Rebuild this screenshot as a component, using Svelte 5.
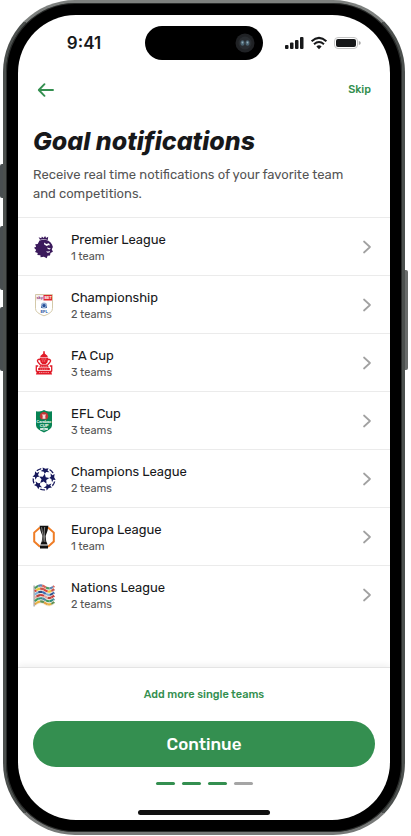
<script lang="ts">
  // One competition in the list
  type League = {
    id: string;
    name: string;
    teams: number;
  };

  const leagues: League[] = [
    { id: 'premier', name: 'Premier League', teams: 1 },
    { id: 'championship', name: 'Championship', teams: 2 },
    { id: 'fa', name: 'FA Cup', teams: 3 },
    { id: 'efl', name: 'EFL Cup', teams: 3 },
    { id: 'champions', name: 'Champions League', teams: 2 },
    { id: 'europa', name: 'Europa League', teams: 1 },
    { id: 'nations', name: 'Nations League', teams: 2 }
  ];

  // Onboarding progress
  const steps = [1, 2, 3, 4];
  let currentStep = $state(3);

  function nextStep() {
    if (currentStep < steps.length) currentStep += 1;
  }

  // Star ball: outer stars sit around the middle one
  const starAngles = [0, 72, 144, 216, 288];

  // Waving flag: bands of coloured pieces
  const flagBands = [
    ['#4c9b62', '#5f86b5', '#d8635c'],
    ['#d8433c', '#e8c63e', '#c9534a'],
    ['#3b6fb5', '#7fb0d8', '#2c4f88'],
    ['#c93f3f', '#e3a6a0', '#b8453f'],
    ['#2f8f83', '#4f86a5', '#3d9a5f'],
    ['#e8b23e', '#5f8f4f', '#e0a040']
  ];
</script>

{#snippet logo(id: string)}
  <svg class="logo" viewBox="0 0 24 24" aria-hidden="true">
    {#if id === 'premier'}
      <g fill="#3b1a5c">
        <path d="M8 4.700 6.600 2.200 9.300 3.200 9.900 1.500 11.600 3 13.100 0.900 14.100 3 16.200 1.800 15.800 4.900Q12 3.900 8 4.700Z" />
        <path d="M7.500 5.600Q12 4 16 5.500L18.400 7.200 20 9.600 20.900 12 19.800 14.200 20.900 16.700 18.500 17.900 18 20.500 15.600 20.700 14.700 23.300 11.900 21.800 8.600 22.300 8.400 20.200 5.400 20 5.700 17.900 3 17 4.200 14.900 2 12.700 4.100 11.800 3.200 9.300 5.700 9Z" />
      </g>
      <path d="m12 7.600 2.300 1.400 2.600-.8 1.300 2.400-1.300-.7-2.200 1.100-2.500-1.500Zm3 4.800 3.800 1-1.100 1.100-1.800-.6ZM14 16.400l2.300.2 1.800-.7-.7 1.500-2 .4Z" fill="#fff" />
    {:else if id === 'championship'}
      <path d="M3.500 1.500h17v14q0 4.500-8.500 7.300-8.500-2.800-8.500-7.300Z" fill="#fff" stroke="#cfc39f" stroke-width=".9" />
      <rect x="4" y="2" width="8" height="5.500" fill="#f4edf0" />
      <rect x="11.500" y="2" width="8.500" height="5.500" fill="#df252d" />
      <text x="4.400" y="6" font-size="4" fill="#8d2a70">sky</text>
      <text x="12.400" y="6" font-size="3.600" fill="#fff">BET</text>
      <circle cx="12" cy="12.500" r="3.100" fill="#9ab2d4" />
      <path d="m12 10.700 1.700 1.200-.7 2H11l-.7-2ZM9.100 13l1.600 2-1.700-.3ZM14.900 13l-1.600 2 1.700-.3Z" fill="#24509b" />
      <text x="8.400" y="20" font-size="4" fill="#24509b">EFL</text>
    {:else if id === 'fa'}
      <g fill="#e11b28">
        <path d="M11.200 .2h1.600v2.300l2.600 2.200.4 1.600H8.200l.4-1.600 2.600-2.200Z" />
        <path d="M7.600 6.700h8.800l-1 4.700-1.600 1.600h-3.600l-1.600-1.600ZM8.600 13.400h6.800l1.600 3.200H7ZM6.200 17.100h11.600v2H6.200ZM5.200 19.700h13.600l1.300 3.800H3.900Z" />
      </g>
      <path d="M8.200 8.500H6.300q-1.800 1.200 0 3L8.500 14M15.800 8.500h1.900q1.800 1.200 0 3L15.500 14M6.200 15H4.300v5l1.800 1.800M17.800 15h1.900v5l-1.800 1.800" fill="none" stroke="#e11b28" stroke-width="1.300" />
      <path d="M9.500 8h5M10.200 10h3.600M8.800 15.300h6.400M8.200 18.100h7.600M7 21.500h10" stroke="#ffd9d9" stroke-width=".6" stroke-dasharray="1.200 .6" />
    {:else if id === 'efl'}
      <path d="M4 2.200q5.500.9 8-1.200 2.500 2.100 8 1.200v14q0 4-8 7.300-8-3.300-8-7.300Z" fill="#078354" />
      <circle cx="12" cy="7.300" r="4.200" fill="#c43535" />
      <path d="M9.700 5.500h4.600l-1 1.300.2 2.900h-3l.2-2.900Z" fill="#f3dddd" />
      <path d="M4 11.400Q12 9.200 20 11.400v3.200H4Z" fill="#078354" />
      <text x="4.600" y="13.900" font-size="3.700" fill="#fff">Carabao</text>
      <text x="7.800" y="17.600" font-size="4.200" fill="#fff">CUP</text>
      <path d="M8 20q4-1.800 8 0-4 2.100-8 0Z" fill="none" stroke="#fff" stroke-width=".9" />
    {:else if id === 'champions'}
      <g transform="translate(12 12) rotate(8)" fill="#17195c">
        <path d="M0-5.400 1.500-2 5.200-1.700 2.400.7 3.200 4.400 0 2.500-3.200 4.400-2.400.7-5.200-1.700-1.500-2Z" />
        {#each starAngles as angle}
          <g transform="rotate({angle})">
            <path d="M0-5.400-1.200-7.200-4.500-7.400-2.300-9-3-11.300 0-10.300 3-11.300 2.300-9 4.500-7.400 1.200-7.200Z" />
            <path d="M4.400-10.700Q7.200-9.400 8.800-7.300L7.300-6.800 6-8.400 4.100-9.300Z" />
          </g>
        {/each}
      </g>
    {:else if id === 'europa'}
      <path d="M8 2.400 2.200 7.600v9L8 21.700M16 2.400l5.800 5.200v9L16 21.700" fill="none" stroke="#ef7d26" stroke-width="2" />
      <path d="M7.600.8h8.800l-.8 4.600-2 5.600.6 5.200 1.400 3.400H8.400l1.400-3.400.6-5.200-2-5.600ZM8 20.400h8v3.200H8Z" fill="#111" />
      <path d="m9.600 2.200.7 4.500 1 4.500-.4 5.500M12.700 2l-.5 5 .3 5 .4 5" fill="none" stroke="#fff" stroke-width=".5" />
    {:else}
      <path d="M2.100 2.500v21" stroke="#777" stroke-width=".9" />
      {#each flagBands as colors, band}
        <g fill="none" stroke-width="2.400">
          {#each colors as color, piece}
            <path
              d="M3 {5.500 + band * 3.200}q4.900-5 9.800-1.500t9.400-1"
              stroke={color}
              stroke-dasharray="4 8"
              stroke-dashoffset={-piece * 4 + band * 2}
            />
          {/each}
          <path d="M3 {7 + band * 3.200}q4.900-5 9.800-1.500t9.400-1" stroke="#f3ead9" stroke-width=".8" />
        </g>
      {/each}
    {/if}
  </svg>
{/snippet}

<div class="stage">
  <div class="phone">
    <span class="key action"></span>
    <span class="key up"></span>
    <span class="key down"></span>
    <span class="key power"></span>

    <main class="screen">
      <div class="status">
        <span class="time">9:41</span>
        <div class="island">
          <svg width="20" height="20" viewBox="0 0 20 20" aria-hidden="true">
            <circle cx="10" cy="10" r="9.500" fill="#202225" />
            <circle cx="10" cy="10" r="6.500" fill="#292d31" />
            <ellipse cx="7.500" cy="10" rx="2" ry="2.800" fill="#49626f" />
            <ellipse cx="12.500" cy="10" rx="2" ry="2.800" fill="#49626f" />
            <circle cx="7.500" cy="9.500" r=".9" fill="#91acb9" />
            <circle cx="12.500" cy="9.500" r=".9" fill="#91acb9" />
          </svg>
        </div>
        <svg class="signals" width="76" height="14" viewBox="0 0 76 14" aria-hidden="true">
          <g fill="#17181a">
            <rect x="0" y="9" width="3.500" height="4" rx="1" />
            <rect x="5" y="6.500" width="3.500" height="6.500" rx="1" />
            <rect x="10" y="4" width="3.500" height="9" rx="1" />
            <rect x="15" y="1" width="3.500" height="12" rx="1" />
            <path d="M31.400 10.400q2.600-2.200 5.200 0L34 13.200Z" />
          </g>
          <g fill="none" stroke="#17181a" stroke-width="2">
            <path d="M26.600 5.200Q34 -1.500 41.400 5.200" />
            <path d="M29 8.200q5-4.300 10 0" />
          </g>
          <rect x="49.500" y="1.500" width="23" height="11" rx="3.500" fill="none" stroke="#c4c4c4" />
          <rect x="51" y="3" width="20" height="8" rx="2" fill="#17181a" />
          <path d="M73.800 5q2 .5 2 2t-2 2Z" fill="#a7a7a7" />
        </svg>
      </div>

      <nav class="topbar">
        <button class="back" aria-label="Back">
          <svg width="18" height="16" viewBox="0 0 18 16" aria-hidden="true">
            <path d="M16 8H2M7.500 2.200 1.800 8l5.700 5.800" fill="none" stroke="#348f50" stroke-width="1.900" stroke-linecap="round" stroke-linejoin="round" />
          </svg>
        </button>
        <button class="text-button">Skip</button>
      </nav>

      <header class="intro">
        <h1>Goal notifications</h1>
        <p>Receive real time notifications of your favorite team and competitions.</p>
      </header>

      <ul class="leagues">
        {#each leagues as league}
          <li>
            <button class="league">
              {@render logo(league.id)}
              <span class="label">
                <span class="name">{league.name}</span>
                <span class="count">{league.teams} {league.teams === 1 ? 'team' : 'teams'}</span>
              </span>
              <svg width="10" height="16" viewBox="0 0 10 16" aria-hidden="true">
                <path d="m2 2.500 6 5.500-6 5.500" fill="none" stroke="#a1a1a1" stroke-width="1.700" stroke-linecap="round" stroke-linejoin="round" />
              </svg>
            </button>
          </li>
        {/each}
      </ul>

      <footer>
        <button class="text-button">Add more single teams</button>
        <button class="continue" onclick={nextStep}>Continue</button>
        <div class="steps">
          {#each steps as step}
            <span class:done={step <= currentStep}></span>
          {/each}
        </div>
        <span class="home"></span>
      </footer>
    </main>
  </div>
</div>

<style>
  :global(body) {
    background: #fff;
  }

  .stage {
    box-sizing: border-box;
    display: flex;
    min-height: 100vh;
    padding: 0 6px 1px 3px;
    font-family: Rubik, Roboto, sans-serif;
    color: #17181a;
  }

  /* Device frame */
  .phone {
    position: relative;
    box-sizing: border-box;
    display: flex;
    flex: 1;
    padding: 12px;
    border: 3px solid #4c504e;
    border-top-color: #7d807e;
    border-bottom-color: #777978;
    border-radius: 72px;
    background: #000;
    box-shadow: inset 0 0 0 1px #292b2a;
  }

  .key {
    position: absolute;
    left: -6px;
    width: 3px;
    border-radius: 2px 0 0 2px;
    background: #494e50;
  }

  .action {
    top: 161px;
    height: 34px;
  }

  .up {
    top: 223px;
    height: 64px;
  }

  .down {
    top: 304px;
    height: 64px;
  }

  .power {
    top: 267px;
    right: -6px;
    left: auto;
    height: 100px;
    border-radius: 0 2px 2px 0;
    background: #686b6a;
  }

  .screen {
    display: flex;
    flex: 1;
    flex-direction: column;
    min-width: 0;
    overflow: hidden;
    border-radius: 58px;
    background: #fff;
  }

  button {
    padding: 0;
    border: 0;
    background: none;
    color: inherit;
    font-family: inherit;
    cursor: pointer;
  }

  svg {
    display: block;
    flex: none;
  }

  .status {
    display: grid;
    grid-template-columns: 1fr 118px 1fr;
    align-items: center;
    padding-top: 11px;
  }

  .time {
    padding-left: 5px;
    font-family: Inter, sans-serif;
    font-size: 17px;
    font-weight: 600;
    line-height: 20px;
    text-align: center;
  }

  .island {
    display: flex;
    align-items: center;
    justify-content: flex-end;
    height: 34px;
    padding-right: 8px;
    border-radius: 17px;
    background: #000;
  }

  .signals {
    justify-self: center;
    margin-right: 8px;
  }

  .topbar {
    display: flex;
    align-items: center;
    justify-content: space-between;
    height: 24px;
    margin-top: 18px;
    padding: 0 19px;
  }

  .text-button {
    color: #348f50;
    font-size: 11px;
    font-weight: 500;
    line-height: 16px;
  }

  .intro {
    padding: 24px 15px 14px;
    border-bottom: 1px solid #ebebeb;
  }

  h1 {
    margin: 0;
    font-family: Inter, sans-serif;
    font-size: 25px;
    font-style: italic;
    font-weight: 800;
    line-height: 30px;
  }

  p {
    margin: 9px 0 0;
    padding-right: 16px;
    color: #555;
    font-size: 13px;
    line-height: 19px;
  }

  .leagues {
    margin: 0;
    padding: 0;
    list-style: none;
  }

  li + li {
    border-top: 1px solid #ebebeb;
  }

  .league {
    display: flex;
    align-items: center;
    width: 100%;
    height: 57px;
    padding: 0 18px 0 14px;
    text-align: left;
  }

  .logo {
    width: 24px;
    height: 24px;
    font-family: "Liberation Sans", sans-serif;
    font-weight: 700;
  }

  .label {
    display: flex;
    flex: 1;
    flex-direction: column;
    margin-left: 15px;
    padding-top: 1px;
  }

  .name {
    font-size: 13px;
    line-height: 18px;
  }

  .count {
    color: #555;
    font-size: 11px;
    line-height: 15px;
  }

  footer {
    display: flex;
    flex-direction: column;
    align-items: center;
    margin-top: auto;
    padding: 19px 15px 5px;
    border-top: 1px solid #e4e4e4;
    box-shadow: 0 -2px 6px #00000010;
  }

  .continue {
    width: 100%;
    height: 46px;
    margin-top: 18px;
    border-radius: 23px;
    background: #348f50;
    color: #fff;
    font-size: 17px;
    font-weight: 500;
  }

  .steps {
    display: flex;
    gap: 7px;
    margin-top: 15px;
  }

  .steps span {
    width: 19px;
    height: 3px;
    border-radius: 2px;
    background: #a5a5a5;
  }

  .steps .done {
    background: #348f50;
  }

  .home {
    width: 132px;
    height: 5px;
    margin-top: 25px;
    border-radius: 3px;
    background: #111;
  }
</style>
